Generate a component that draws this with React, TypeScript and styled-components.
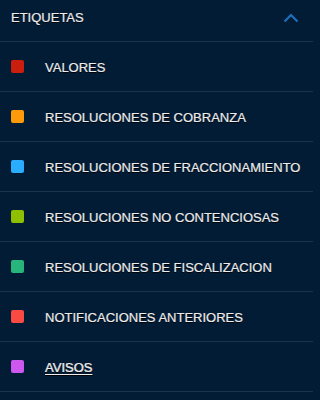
import styled, { createGlobalStyle } from "styled-components";

const GlobalStyle = createGlobalStyle`
    html, body {
        margin: 0;
        padding: 0;
        background: #021c36;
    }
`;

const tags = [
    { label: "VALORES", color: "#cc1e0e" },
    { label: "RESOLUCIONES DE COBRANZA", color: "#ff9a0a" },
    { label: "RESOLUCIONES DE FRACCIONAMIENTO", color: "#2aacff" },
    { label: "RESOLUCIONES NO CONTENCIOSAS", color: "#8fc000" },
    { label: "RESOLUCIONES DE FISCALIZACION", color: "#27b57c" },
    { label: "NOTIFICACIONES ANTERIORES", color: "#fb4a42" },
    { label: "AVISOS", color: "#cc58ef", active: true },
];

const ChevronUp = () => (
    <svg width="16" height="10" viewBox="0 0 16 10" fill="none">
        <path d="M1.5 8.5 L8 2 L14.5 8.5" stroke="#1d6fbd" strokeWidth="2.2" />
    </svg>
);

const App = () => {
    return (
        <>
            <GlobalStyle />
            <Panel>
                <Header>
                    <span className="title">ETIQUETAS</span>
                    <ChevronUp />
                </Header>
                <List>
                    {tags.map((tag) => (
                        <Row key={tag.label}>
                            <Swatch $color={tag.color} />
                            <Label $active={tag.active}>{tag.label}</Label>
                        </Row>
                    ))}
                </List>
            </Panel>
        </>
    );
};

const Panel = styled.div`
    width: 313px;
    background: #021c36;
    font-family: "Liberation Sans", Arial, sans-serif;
    color: #ececec;
`;

const Header = styled.div`
    display: flex;
    align-items: center;
    justify-content: space-between;
    height: 41px;
    padding: 0 14px 0 11px;
    border-bottom: 1px solid #1c324b;

    .title {
        font-size: 13px;
        text-shadow: 0 1px 0 rgba(0, 0, 0, 0.9);
        -webkit-text-stroke: 0.2px #ececec;
        margin-top: -6px;
    }

    svg {
        margin-top: -5px;
    }
`;

const List = styled.ul`
    list-style: none;
    margin: 0;
    padding: 0;
`;

const Row = styled.li`
    display: flex;
    align-items: center;
    height: 49px;
    padding-left: 11px;
    border-bottom: 1px solid #1c324b;
`;

const Swatch = styled.span<{ $color: string }>`
    width: 13px;
    height: 13px;
    border-radius: 2px;
    background: ${(p) => p.$color};
    flex-shrink: 0;
    margin-right: 21px;
`;

const Label = styled.span<{ $active?: boolean }>`
    font-size: 13px;
    padding-top: 1px;
    text-shadow: 0 1px 0 rgba(0, 0, 0, 0.9);
    -webkit-text-stroke: 0.2px #ececec;
    text-decoration: ${(p) => (p.$active ? "underline" : "none")};
    text-underline-offset: 2px;
`;

export default App;
